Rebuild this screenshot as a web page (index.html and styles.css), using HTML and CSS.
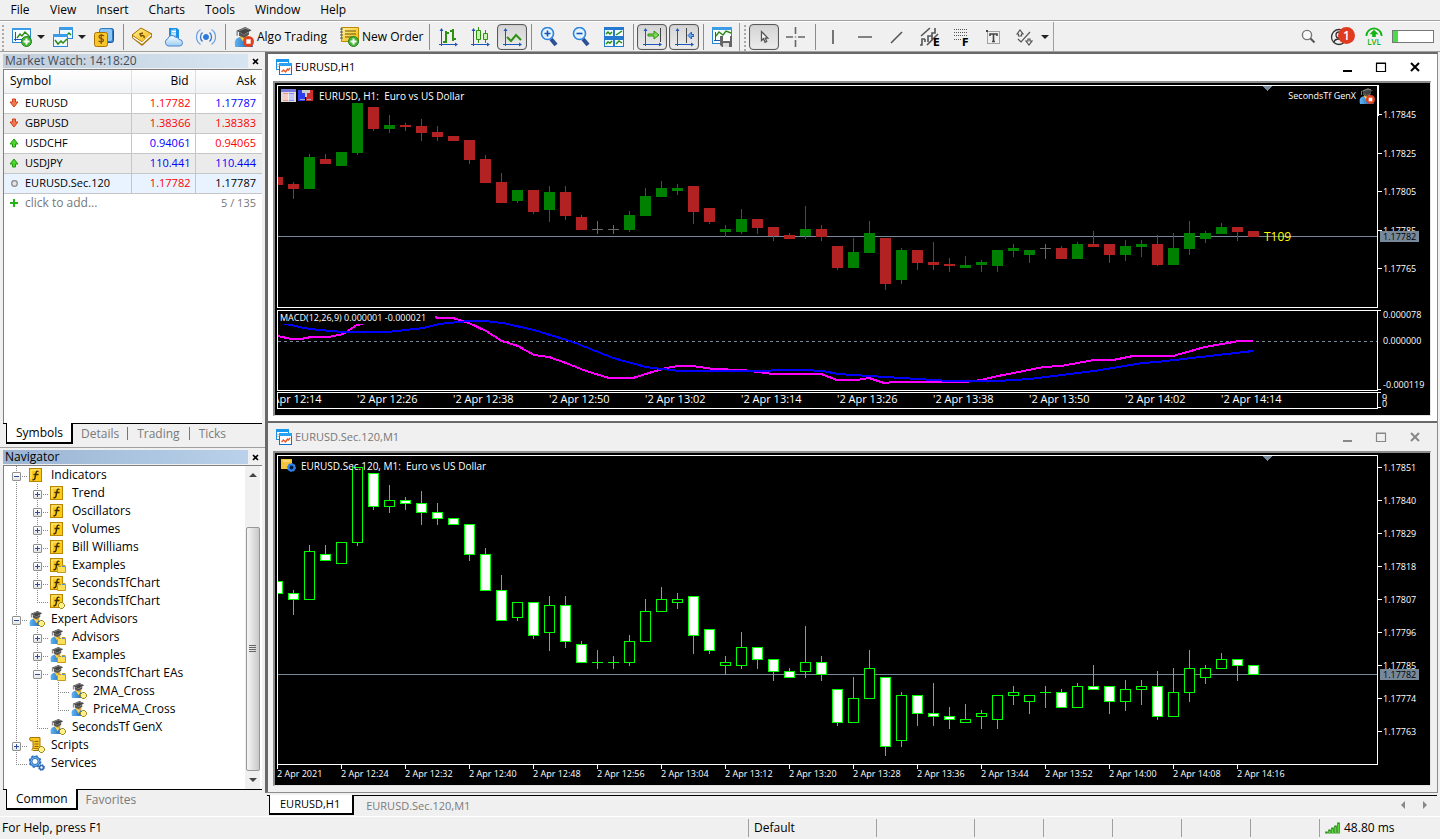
FILE: index.html
```html
<!DOCTYPE html>
<html lang="en">
<head>
<meta charset="utf-8">
<title>Trading Terminal - EURUSD,H1</title>
<link rel="stylesheet" href="styles.css">
</head>
<body>
<svg class="defs" aria-hidden="true">
  <defs>
    <linearGradient id="gold" x1="0" y1="0" x2="1" y2="1"><stop offset="0" stop-color="#fff3a0"/><stop offset="1" stop-color="#f0b400"/></linearGradient>
    <linearGradient id="sky" x1="0" y1="0" x2="0" y2="1"><stop offset="0" stop-color="#fdfeff"/><stop offset="1" stop-color="#9ccdf4"/></linearGradient>
    <linearGradient id="coat" x1="0" y1="0" x2="1" y2="0"><stop offset="0" stop-color="#5fb4f2"/><stop offset="1" stop-color="#1456a8"/></linearGradient>
    <symbol id="plus" viewBox="0 0 11 11"><circle cx="5.500" cy="5.500" r="5" fill="#45b637" stroke="#23801c"/><path d="M5.500 2.500v6M2.500 5.500h6" stroke="#fff" stroke-width="2"/></symbol>
    <symbol id="axes" viewBox="0 0 20 20"><path d="M3.500 2v17M1 17.500h17" stroke="#1d57b8" fill="none"/><path d="M1.500 4l2-3 2 3zM17 15.500l3 2-3 2z" fill="#1d57b8"/></symbol>
    <symbol id="expert" viewBox="0 0 16 16"><path d="M1 16c-1-5 0-7 4-8l3 1 3 1c3 1 4 3 4 6z" fill="url(#coat)"/><path d="M5 6h6v3l-2 2-4-2z" fill="#d9a43c"/><path d="M5 8l3 5 2-3z" fill="#f7d44c"/><path d="M2 3l7-3 5 2.500-6 3.500z" fill="#444"/><path d="M4 4v3l4 1.500 4-2.500V4l-4 2z" fill="#555"/><path d="M2.500 3v4" stroke="#777"/><path d="M4 3l5-2 3 1" stroke="#888" fill="none"/></symbol>
    <symbol id="stop" viewBox="0 0 10 10"><circle cx="5" cy="5" r="5" fill="#e0421f"/><rect x="3" y="3" width="4" height="4" fill="#fff"/></symbol>
    <symbol id="func" viewBox="0 0 16 16"><rect x=".5" y="1.500" width="12" height="13" fill="#fcc917" stroke="#b98600"/><path d="M2 3h9M2 3v9" stroke="#fff09a" fill="none"/><path d="M9.500 4.500c-1.500-1-2.200 0-2.500 1.500L6 11c-.3 1.500-1 2-2.500 1.500M4.500 7.500h5" fill="none" stroke="#3a2c00" stroke-width="1.400"/></symbol>
    <symbol id="folder" viewBox="0 0 9 8"><path d="M.5 7.500v-5l1-1H4l1-1h3l.5 1v6z" fill="#ffdf56" stroke="#c79a1e"/><path d="M5 1.500h3" stroke="#4d8fd6"/></symbol>
    <symbol id="gem" viewBox="0 0 7 7"><path d="M2.500.5h2l2 2v2l-2 2h-2l-2-2v-2z" fill="#fff08a" stroke="#958016"/></symbol>
    <symbol id="i-func" viewBox="0 0 16 16"><use href="#func" width="16" height="16"/></symbol>
    <symbol id="i-funcf" viewBox="0 0 16 16"><use href="#func" width="16" height="16"/><use href="#folder" x="7" y="8" width="9" height="8"/></symbol>
    <symbol id="i-funcg" viewBox="0 0 16 16"><use href="#func" width="16" height="16"/><use href="#gem" x="8" y="9" width="7" height="7"/></symbol>
    <symbol id="i-eaf" viewBox="0 0 16 16"><use href="#expert" width="15" height="15"/><use href="#folder" x="7" y="8" width="9" height="8"/></symbol>
    <symbol id="i-eag" viewBox="0 0 16 16"><use href="#expert" width="15" height="15"/><use href="#gem" x="9" y="9" width="7" height="7"/></symbol>
    <symbol id="i-script" viewBox="0 0 16 16"><path d="M1 .5h10v10l-1 3H4V4H1.500L.5 2z" fill="#f9c522" stroke="#a87600"/><path d="M5.500 4.500h4M5.500 7h4M5.500 9.500h4" stroke="#8b6400"/><path d="M3 13.500c0-2 1-3 2-2h6" stroke="#a87600" fill="#ffe27a"/><use href="#gem" x="9" y="9" width="7" height="7"/></symbol>
    <symbol id="i-gear" viewBox="0 0 16 16"><circle cx="6" cy="6.500" r="4" fill="none" stroke="#2d73c4" stroke-width="3"/><circle cx="6" cy="6.500" r="5.600" fill="none" stroke="#2d73c4" stroke-width="1.600" stroke-dasharray="2.200 2.200"/><circle cx="6" cy="6.500" r="4" fill="none" stroke="#7db4ea"/><circle cx="12.500" cy="12.500" r="2" fill="none" stroke="#2d6ab5" stroke-width="1.600"/><circle cx="12.500" cy="12.500" r="3" fill="none" stroke="#2d6ab5" stroke-dasharray="1.200 1.200"/></symbol>
    <symbol id="i-win" viewBox="0 0 16 16"><rect x=".5" y=".5" width="12" height="10" fill="#fff" stroke="#1c8fe3"/><path d="M0 0h13v3H0z" fill="#1898ee"/><path d="M2 5v4" stroke="#888" stroke-dasharray="1"/><rect x="3.500" y="4.500" width="12" height="11" fill="#fff" stroke="#1273cc"/><path d="M3 4h13v3H3z" fill="#28a2f2"/><path d="M5.500 13l2-2 2 2 2-3 1 1 1.500-2" stroke="#e8582a" fill="none" stroke-width="1.400"/></symbol>
  </defs>
</svg>

<div class="app">
  <nav class="menubar">
    <button>File</button><button>View</button><button>Insert</button><button>Charts</button><button>Tools</button><button>Window</button><button>Help</button>
  </nav>

  <div class="toolbar" role="toolbar">
    <span class="grip first"></span>
    <button class="tb drop" aria-label="New chart"><svg viewBox="0 0 20 20"><rect x=".5" y="1.500" width="18" height="14" fill="#f7fcff" stroke="#2a86d4"/><path d="M0 1h19v2H0z" fill="#3d9ce6"/><path d="M3.500 5v9M2 12.500h9" stroke="#1d57b8"/><path d="M5 11l3-4 2 2 3-4 3 3 2 2" fill="none" stroke="#2c8c10" stroke-width="1.400"/><use href="#plus" x="9" y="9" width="11" height="11"/></svg><i></i></button>
    <button class="tb drop" aria-label="Profiles"><svg viewBox="0 0 20 20"><rect x="6.500" y=".5" width="13" height="11" fill="#eef8ff" stroke="#2a86d4"/><path d="M6 0h14v3H6z" fill="#3d9ce6"/><path d="M14 8l2-2 2 2" fill="none" stroke="#2c8c10" stroke-width="1.500"/><rect x=".5" y="7.500" width="14" height="12" fill="#eef8ff" stroke="#2a86d4"/><path d="M0 7h15v3H0z" fill="#3d9ce6"/><path d="M2 13l3 4 3-3 2 2 4-4" fill="none" stroke="#2c8c10" stroke-width="1.500"/></svg><i></i></button>
    <button class="tb" aria-label="Market Watch"><svg viewBox="0 0 20 20"><rect x="8.500" y="1.500" width="11" height="14" rx="2" fill="#3f9be8" stroke="#17569b"/><rect x="5.500" y="1.500" width="13" height="13" rx="2" fill="#8cc6f5" stroke="#2d78bf"/><rect x=".5" y="5.500" width="13" height="14" rx="2" fill="#f8c62b" stroke="#a87400"/><path d="M10 9c-2-1.500-5-1-5 .8 0 2.400 4.500 1.200 4.500 3.400 0 1.800-3 2-5 .7M7.200 7v10" fill="none" stroke="#7d5200" stroke-width="1.200"/></svg></button>
    <span class="sep"></span>
    <button class="tb" aria-label="Book"><svg viewBox="0 0 20 20"><path d="M0 8l9-7 11 6v3l-10 9L0 11z" fill="#a97408"/><path d="M0 8l9-7 11 6-10 8z" fill="url(#gold)" stroke="#a97408"/><path d="M1 10l9 6 9-8" fill="none" stroke="#fff" stroke-width="1.400"/><path d="M11 6L8 7l1 2c2-1 4 0 3 2" fill="none" stroke="#7a5000" stroke-width="1.500"/></svg></button>
    <button class="tb" aria-label="Cloud"><svg viewBox="0 0 20 20"><path d="M5 1h8l2 2v10H5z" fill="#1a8fe6"/><path d="M7 3l5-1v8H7z" fill="#8fd0fb"/><path d="M8 4.500h4M8 7h4" stroke="#fff"/><path d="M4 19a4 4 0 010-7.500 4 4 0 017-1.500 4 4 0 014 2.500 3.300 3.300 0 011 6.500z" fill="url(#sky)" stroke="#4a86cf"/></svg></button>
    <button class="tb" aria-label="Signals"><svg viewBox="0 0 20 20" fill="none" stroke="#3577cf"><circle cx="10" cy="10" r="2.500" fill="#2a7be0"/><path d="M6.500 5.500a6 6 0 000 9M13.500 5.500a6 6 0 010 9" stroke-width="1.300"/><path d="M4.500 2.500a9 9 0 000 15M15.500 2.500a9 9 0 010 15" stroke="#6ba0e3" stroke-width="1.300"/></svg></button>
    <span class="sep"></span>
    <button class="tb text algo"><svg viewBox="0 0 20 20"><use href="#expert" width="20" height="20"/><use href="#stop" x="9" y="9" width="11" height="11"/></svg>Algo Trading</button>
    <button class="tb text order"><svg viewBox="0 0 20 20"><path d="M2.500.5h17v14h-17z" fill="url(#gold)" stroke="#c08a00"/><path d="M6 4h11M6 7h11M6 10h7" stroke="#6d5300"/><path d="M1 2h3M1 5h3M1 8h3M1 11h3" stroke="#555"/><use href="#plus" x="9" y="9" width="11" height="11"/></svg>New Order</button>
    <span class="sep"></span>
    <button class="tb" aria-label="Bar chart"><svg viewBox="0 0 20 20"><use href="#axes" width="20" height="20"/><path d="M8 4v12M5 15h3M8 6h3M15 2v12M12 4h3M15 12h3" stroke="#2f9110" stroke-width="2"/></svg></button>
    <button class="tb" aria-label="Candlesticks"><svg viewBox="0 0 20 20"><use href="#axes" width="20" height="20"/><path d="M8.500 0v16M15.500 3v13" stroke="#2f9110"/><path d="M6.500 3.500h4v9h-4zM13.500 6.500h4v6h-4z" fill="#c9f0b5" stroke="#2f9110"/></svg></button>
    <button class="tb on" aria-label="Line chart"><svg viewBox="0 0 20 20"><use href="#axes" width="20" height="20"/><path d="M5 10l4 4 5-6 5 5" stroke="#2f9110" stroke-width="2" fill="none"/></svg></button>
    <span class="sep"></span>
    <button class="tb" aria-label="Zoom in"><svg viewBox="0 0 20 20"><path d="M11 12l5 6" stroke="#2d4f96" stroke-width="4"/><circle cx="7.500" cy="6.500" r="6" fill="#e4f4ff" stroke="#2b83dc" stroke-width="1.600"/><path d="M7.500 3.500v6M4.500 6.500h6" stroke="#1452b5" stroke-width="1.600"/></svg></button>
    <button class="tb" aria-label="Zoom out"><svg viewBox="0 0 20 20"><path d="M11 12l5 6" stroke="#2d4f96" stroke-width="4"/><circle cx="7.500" cy="6.500" r="6" fill="#e4f4ff" stroke="#2b83dc" stroke-width="1.600"/><path d="M4.500 6.500h6" stroke="#1452b5" stroke-width="1.600"/></svg></button>
    <button class="tb" aria-label="Tile windows"><svg viewBox="0 0 20 20"><path d="M0 0h20v20H0z" fill="#2579d0"/><path d="M1 3h8v6H1zM11 3h8v6h-8zM1 13h8v6H1zM11 13h8v6h-8z" fill="#eefaff"/><path d="M2 7l2-2 2 2 2-2M12 8l3-2 3-2M2 17l2-2 2 1 2-2M12 17l3-3 3 2" fill="none" stroke="#2c8c10" stroke-width="1.500"/></svg></button>
    <span class="sep"></span>
    <button class="tb on" aria-label="Auto scroll"><svg viewBox="0 0 20 20"><use href="#axes" width="20" height="20"/><path d="M18.500 1v14" stroke="#444"/><path d="M6 7h6V4l5 4-5 4V9H6z" fill="#7ed957" stroke="#2f9110"/></svg></button>
    <button class="tb on" aria-label="Chart shift"><svg viewBox="0 0 20 20"><use href="#axes" width="20" height="20"/><path d="M12.500 1v15" stroke="#444"/><path d="M20 7.500h-2.500V5L14 8.500l3.500 3.500V9.500H20z" fill="#6fa8ea" stroke="#2160bd"/></svg></button>
    <span class="sep"></span>
    <button class="tb" aria-label="Templates"><svg viewBox="0 0 20 20"><rect x=".5" y=".5" width="19" height="16" fill="#f7fcff" stroke="#2a86d4"/><path d="M0 0h20v3H0z" fill="#3d9ce6"/><path d="M3.500 5v9M2 13.500h6" stroke="#1d57b8"/><path d="M4 9l3-4 4 3 3-4 5 2" fill="none" stroke="#2c8c10" stroke-width="1.400"/><path d="M8 9h12v11H10l-2-2z" fill="#666"/><path d="M11 9h7v5h-7z" fill="#fff"/><path d="M11 16h6v4h-6z" fill="#ddd"/></svg></button>
    <span class="grip"></span>
    <button class="tb on" aria-label="Cursor"><svg viewBox="0 0 20 20"><path d="M7.500 4.500v9l2-1.800 1.600 3.600 1.600-.8-1.500-3.400h2.600z" fill="#fff" stroke="#555" stroke-width="1.300"/></svg></button>
    <button class="tb" aria-label="Crosshair"><svg viewBox="0 0 20 20"><path d="M9.500 0v7M9.500 13v7M0 10h7M12 10h7M9.500 9.500v1" stroke="#666" stroke-width="1.600"/></svg></button>
    <span class="sep"></span>
    <button class="tb" aria-label="Vertical line"><svg viewBox="0 0 20 20"><path d="M9 3v14" stroke="#555" stroke-width="1.600"/></svg></button>
    <button class="tb" aria-label="Horizontal line"><svg viewBox="0 0 20 20"><path d="M2 10h14" stroke="#666" stroke-width="1.600"/></svg></button>
    <button class="tb" aria-label="Trend line"><svg viewBox="0 0 20 20"><path d="M3 16L14 5" stroke="#555" stroke-width="1.600"/></svg></button>
    <button class="tb" aria-label="Equidistant channel"><svg viewBox="0 0 20 20"><path d="M1 9L10 1M7 18L18 7M-1 18h3v-6h3M8 15V9h4V6h3V1M12 14V8M5 12v3" fill="none" stroke="#555" stroke-width="1.600"/><text x="13" y="19" class="glyph">E</text></svg></button>
    <button class="tb" aria-label="Fibonacci"><svg viewBox="0 0 20 20"><path d="M2 2.500h14M2 5.500h14M2 8.500h14M2 12.500h8" stroke="#555" stroke-dasharray="1 1"/><text x="10" y="19" class="glyph">F</text></svg></button>
    <button class="tb" aria-label="Text"><svg viewBox="0 0 20 20"><rect x="3.500" y="4.500" width="12" height="12" fill="none" stroke="#555" stroke-dasharray="1 1"/><path d="M2 3h2v2H2z" fill="#444"/><path d="M6 9V7h7v2M9.500 7v7M8 14.500h3" stroke="#444" fill="none" stroke-width="1.600"/></svg></button>
    <button class="tb drop" aria-label="Objects"><svg viewBox="0 0 20 20"><path d="M1 7l3-4 3 4H5.500v2h-3V7zM10 14h2v-2h2v2h2l-3 4zM2 12l3 3 9-10" fill="none" stroke="#555" stroke-width="1.200"/></svg><i></i></button>
    <span class="endline"></span>
    <span class="spacer"></span>
    <button class="tb" aria-label="Search"><svg viewBox="0 0 20 20"><circle cx="9" cy="8" r="4.600" fill="#fafafa" stroke="#777" stroke-width="1.400"/><path d="M12.500 11.500l4 4" stroke="#555" stroke-width="2"/></svg></button>
    <button class="tb account" aria-label="Account"><svg viewBox="0 0 20 20"><circle cx="9" cy="10" r="7.500" fill="none" stroke="#333" stroke-width="1.300"/><circle cx="9" cy="8" r="3" fill="none" stroke="#333" stroke-width="1.300"/><path d="M4 15c1-4 9-4 10 0" fill="none" stroke="#333" stroke-width="1.300"/></svg><b>1</b></button>
    <button class="tb level" aria-label="Level"><svg viewBox="0 0 20 12"><path d="M1.500 10a8.500 8.500 0 0117 0" fill="none" stroke="#12b312" stroke-width="2"/><path d="M10 3l5 5h-3v3H8V8H5z" fill="#12b312"/></svg><em>LVL</em></button>
    <span class="meter"><span></span></span>
  </div>

  <div class="work">
    <aside class="side">
      <section class="panel watch">
        <header class="ptitle dim"><h2>Market Watch: 14:18:20</h2><button aria-label="Close"><svg viewBox="0 0 7 7"><path d="M1 1l5 5M6 1L1 6" stroke="#000" stroke-width="1.600"/></svg></button></header>
        <div class="box">
          <table>
            <thead><tr><th>Symbol</th><th>Bid</th><th>Ask</th></tr></thead>
            <tbody>
              <tr><td><svg class="ar" viewBox="0 0 10 10"><path d="M3.500 1h3v3H9L5 9 1 4h2.500z" fill="#ee7a55" stroke="#cf3f14"/></svg>EURUSD</td><td class="r">1.17782</td><td class="b">1.17787</td></tr>
              <tr><td><svg class="ar" viewBox="0 0 10 10"><path d="M3.500 1h3v3H9L5 9 1 4h2.500z" fill="#ee7a55" stroke="#cf3f14"/></svg>GBPUSD</td><td class="r">1.38366</td><td class="r">1.38383</td></tr>
              <tr><td><svg class="ar" viewBox="0 0 10 10"><path d="M3.500 9h3V6H9L5 1 1 6h2.500z" fill="#4fd62c" stroke="#1f9a0c"/></svg>USDCHF</td><td class="b">0.94061</td><td class="r">0.94065</td></tr>
              <tr><td><svg class="ar" viewBox="0 0 10 10"><path d="M3.500 9h3V6H9L5 1 1 6h2.500z" fill="#4fd62c" stroke="#1f9a0c"/></svg>USDJPY</td><td class="b">110.441</td><td class="b">110.444</td></tr>
              <tr class="sel"><td><svg class="ar" viewBox="0 0 10 10"><circle cx="5.500" cy="5.500" r="2.800" fill="#e4e4e4" stroke="#8c8c8c" stroke-width="1.300"/></svg>EURUSD.Sec.120</td><td class="r">1.17782</td><td>1.17787</td></tr>
              <tr class="add"><td><svg class="ar" viewBox="0 0 10 10"><path d="M5 1v8M1 5h8" stroke="#22b414" stroke-width="2"/></svg>click to add...</td><td></td><td>5 / 135</td></tr>
            </tbody>
          </table>
        </div>
        <div class="tabs"><button class="cur">Symbols</button><button>Details</button><button>Trading</button><button>Ticks</button></div>
      </section>

      <section class="panel navi">
        <header class="ptitle"><h2>Navigator</h2><button aria-label="Close"><svg viewBox="0 0 7 7"><path d="M1 1l5 5M6 1L1 6" stroke="#000" stroke-width="1.600"/></svg></button></header>
        <div class="box split">
          <ul class="tree">
            <li><span class="g t"><button class="ex minus" aria-label="Collapse"></button></span><svg><use href="#i-func"/></svg>Indicators</li>
            <li><span class="g v"></span><span class="g t"><button class="ex" aria-label="Expand"></button></span><svg><use href="#i-func"/></svg>Trend</li>
            <li><span class="g v"></span><span class="g t"><button class="ex" aria-label="Expand"></button></span><svg><use href="#i-func"/></svg>Oscillators</li>
            <li><span class="g v"></span><span class="g t"><button class="ex" aria-label="Expand"></button></span><svg><use href="#i-func"/></svg>Volumes</li>
            <li><span class="g v"></span><span class="g t"><button class="ex" aria-label="Expand"></button></span><svg><use href="#i-func"/></svg>Bill Williams</li>
            <li><span class="g v"></span><span class="g t"><button class="ex" aria-label="Expand"></button></span><svg><use href="#i-funcf"/></svg>Examples</li>
            <li><span class="g v"></span><span class="g t"><button class="ex" aria-label="Expand"></button></span><svg><use href="#i-funcf"/></svg>SecondsTfChart</li>
            <li><span class="g v"></span><span class="g l"></span><svg><use href="#i-funcg"/></svg>SecondsTfChart</li>
            <li><span class="g t"><button class="ex minus" aria-label="Collapse"></button></span><svg><use href="#i-eag"/></svg>Expert Advisors</li>
            <li><span class="g v"></span><span class="g t"><button class="ex" aria-label="Expand"></button></span><svg><use href="#i-eaf"/></svg>Advisors</li>
            <li><span class="g v"></span><span class="g t"><button class="ex" aria-label="Expand"></button></span><svg><use href="#i-eaf"/></svg>Examples</li>
            <li><span class="g v"></span><span class="g t"><button class="ex minus" aria-label="Collapse"></button></span><svg><use href="#i-eaf"/></svg>SecondsTfChart EAs</li>
            <li><span class="g v"></span><span class="g v"></span><span class="g t"></span><svg><use href="#i-eag"/></svg>2MA_Cross</li>
            <li><span class="g v"></span><span class="g v"></span><span class="g l"></span><svg><use href="#i-eag"/></svg>PriceMA_Cross</li>
            <li><span class="g v"></span><span class="g l"></span><svg><use href="#i-eag"/></svg>SecondsTf GenX</li>
            <li><span class="g t"><button class="ex" aria-label="Expand"></button></span><svg><use href="#i-script"/></svg>Scripts</li>
            <li><span class="g l"></span><svg><use href="#i-gear"/></svg>Services</li>
          </ul>
          <div class="scroll"><span class="arrow up"></span><span class="thumb"><i></i></span><span class="arrow down"></span></div>
        </div>
        <div class="tabs"><button class="cur">Common</button><button>Favorites</button></div>
      </section>
    </aside>

    <main class="mdi">
      <div class="windows">
        <section class="win active">
          <header><svg class="wico"><use href="#i-win"/></svg><h1>EURUSD,H1</h1>
            <div class="ctl"><button aria-label="Minimize"><svg viewBox="0 0 12 12"><path d="M2 10h9" stroke-width="2"/></svg></button><button aria-label="Maximize"><svg viewBox="0 0 12 12"><path d="M1.500 2.500h9v8h-9zM1 2h10" stroke-width="1.200"/></svg></button><button aria-label="Close"><svg viewBox="0 0 12 12"><path d="M2 2l8 8M10 2l-8 8" stroke-width="2"/></svg></button></div>
          </header>
          <div class="chart">
            <div class="plot p-main"><svg id="h1"></svg>
              <p class="legend"><svg viewBox="0 0 15 13"><path d="M0 0h15v13H0z" fill="#ddd"/><path d="M0 0h15v3H0z" fill="#7777dd"/><path d="M2 4h5v8H2z" fill="#ee9a88"/><path d="M8 4h5v8H8z" fill="#8c8cf0"/><path d="M2 6h11M2 8h11M2 10h11" stroke="#fff"/></svg><svg viewBox="0 0 15 13"><path d="M0 1h7v11H0z" fill="#2c3cf0"/><path d="M8 1h7v11H8z" fill="#d02c2c"/><path d="M4 1h8v3H9v4H7V4H4z" fill="#ccc"/><path d="M2 10.500h5M9 10.500h4" stroke="#aab"/></svg>EURUSD, H1:&nbsp; Euro vs US Dollar</p>
              <p class="expert">SecondsTf GenX<svg viewBox="0 0 16 16"><use href="#expert" width="16" height="16"/><use href="#stop" x="7" y="7" width="9" height="9"/></svg></p>
            </div><div class="axis"><svg id="h1-axis"></svg></div>
            <div class="plot p-macd"><svg>
              <path class="zero" d="M0 30.500h3000"/>
              <path class="main" d="M0 25L13 28 23 28 33 26 51 26 65 23 79 14 85 13M157 6L160 7 175 7 191 12 208 20 224 30 240 35 256 44 271 46 288 52 308 60 331 67 355 67 371 62 388 57 400 55 415 55 435 58 465 59 480 61 495 63 543 63 559 69 579 69 591 67 606 72 616 71 687 71 703 69 720 65 766 56 783 55 816 49 835 49 855 45 895 45 927 36 961 30 975 30"/>
              <path class="signal" d="M0 11L8 13 31 18 65 21 110 21 145 17 161 13 191 10 206 10 225 12 256 19 295 31 335 47 368 56 401 60 462 60 525 59 545 60 560 63 608 66 672 70 719 70 752 68 816 60 864 52 879 51 931 45 975 40"/>
            </svg><p class="legend">MACD(12,26,9) 0.000001 -0.000021</p></div>
            <div class="axis"><svg><path d="M0 .5h3M0 79.500h3" stroke="#fff"/><text x="5" y="8">0.000078</text><text x="5" y="34">0.000000</text><text x="5" y="78">-0.000119</text></svg></div>
            <div class="plot p-time"><svg id="h1-time"></svg></div>
            <div class="axis over"><svg><path d="M0 .5h3M0 15.500h3" stroke="#fff"/><text x="4" y="9">9</text><text x="4" y="15">0</text></svg></div>
          </div>
        </section>
        <section class="win">
          <header><svg class="wico"><use href="#i-win"/></svg><h1>EURUSD.Sec.120,M1</h1>
            <div class="ctl"><button aria-label="Minimize"><svg viewBox="0 0 12 12"><path d="M2 10h9" stroke-width="2"/></svg></button><button aria-label="Maximize"><svg viewBox="0 0 12 12"><path d="M1.500 2.500h9v8h-9zM1 2h10" stroke-width="1.200"/></svg></button><button aria-label="Close"><svg viewBox="0 0 12 12"><path d="M2 2l8 8M10 2l-8 8" stroke-width="2"/></svg></button></div>
          </header>
          <div class="chart">
            <div class="plot p-sec"><svg id="m1"></svg>
              <p class="legend"><svg viewBox="0 0 15 13"><path d="M0 0h11v10H0z" fill="#f3c33b"/><path d="M2 2h7" stroke="#fff3b0"/><circle cx="10.500" cy="8.500" r="3" fill="#001a40" stroke="#2f80ea" stroke-width="2"/><circle cx="10.500" cy="8.500" r="4" fill="none" stroke="#2f80ea" stroke-dasharray="1.500 1.500"/></svg>EURUSD.Sec.120, M1:&nbsp; Euro vs US Dollar</p>
            </div><div class="axis"><svg id="m1-axis"></svg></div>
            <div class="dates"><svg id="m1-time"></svg></div>
          </div>
        </section>
      </div>
      <div class="doctabs"><button class="cur">EURUSD,H1</button><button>EURUSD.Sec.120,M1</button><span class="pager"><i class="lt"></i><i class="gt"></i></span></div>
    </main>
  </div>

  <footer class="status">
    <span class="help">For Help, press F1</span><span class="c1">Default</span><span class="c2"></span><span class="c3"></span><span class="c3"></span><span class="c3"></span><span class="c3"></span><span class="c3"></span><span class="c4"><svg viewBox="0 0 15 12"><path d="M1.500 9.500v2M4.500 7.500v4M7.500 5.500v6M10.500 3.500v8M13.500.5v11" stroke="#1f8f0c" stroke-width="2.600"/><path d="M4.500 9v2M7.500 7v4M10.500 5v6M13.500 2v9" stroke="#58d63a"/></svg>48.80 ms</span>
  </footer>
</div>
<script src="chart.js"></script>
</body>
</html>
```

FILE: styles.css
```css
* { box-sizing: border-box; }
body { margin: 0; background: #f0f0f0; color: #000; font: 12px/16px "Open Sans", "Noto Sans", sans-serif; }
button { font: inherit; color: inherit; background: none; border: 0; padding: 0; margin: 0; }
h1, h2, p, ul { margin: 0; padding: 0; font: inherit; }
svg { display: block; flex: none; }
.defs { position: absolute; width: 0; height: 0; }
.app { display: flex; flex-direction: column; min-height: 100vh; border-bottom: 1px solid #2b3a52; }

.menubar { display: flex; height: 21px; border-bottom: 1px solid #a0a0a0; }
.menubar button { padding: 0 10px 1px; min-width: 40px; }
.menubar button:nth-child(3), .menubar button:nth-child(4) { min-width: 52px; }

.toolbar { display: flex; align-items: center; gap: 2px; height: 31px; border-top: 1px solid #fff; border-bottom: 1px solid #a0a0a0; }
.grip { width: 8px; height: 28px; border-left: 1px solid #a0a0a0; background: radial-gradient(circle, #aaa 1px, transparent 1px) 3px 1px / 4px 4px repeat-y; }
.grip.first { width: 5px; border: 0; background-position: 1px 1px; }
.tb { display: flex; align-items: center; justify-content: center; width: 30px; height: 26px; white-space: nowrap; flex: none; }
.tb > svg { width: 20px; height: 20px; }
.tb.drop { width: 39px; padding-left: 5px; justify-content: flex-start; gap: 5px; }
.tb.drop i { width: 0; height: 0; border: 4px solid transparent; border-top-color: #222; border-bottom: 0; flex: none; }
.tb.text { justify-content: flex-start; gap: 3px; padding-left: 5px; }
.tb.algo { width: 103px; }
.tb.order { width: 91px; }
.tb.on { border: 1px solid #5a5a5a; border-radius: 4px; background: linear-gradient(#d4d4d4, #ececec); box-shadow: inset 0 0 1px #888; }
.sep { width: 4px; height: 26px; background: linear-gradient(#8c8c8c, #8c8c8c) 2px 0 / 1px 100% no-repeat; flex: none; }
.endline { width: 2px; height: 29px; border-right: 1px solid #a0a0a0; }
.spacer { flex: 1; }
.glyph { font: bold 10px "DejaVu Sans", sans-serif; }
.account { position: relative; }
.account b { position: absolute; left: 13px; top: 3px; width: 17px; height: 17px; border-radius: 50%; background: #e03a20; color: #fff; font-weight: 600; line-height: 17px; text-align: center; }
.level { flex-direction: column; margin-left: 2px; }
.level > svg { width: 18px; height: 11px; }
.level em { font: normal 600 8px/8px "Open Sans", sans-serif; color: #12b312; }
.meter { width: 42px; height: 13px; margin: 0 6px 0 1px; border: 1px solid #777; background: #fff; display: flex; }
.meter span { width: 5px; background: #4bdc4b; }

.work { display: grid; grid-template-columns: 265px minmax(0, 1fr); flex: 1; }
.side { display: flex; flex-direction: column; }
.panel { display: flex; flex-direction: column; padding: 2px 3px 0; }
.watch { flex: 1; }
.navi { border-top: 1px solid #a0a0a0; padding: 2px 3px 4px; }
.ptitle { display: flex; justify-content: space-between; height: 14px; margin-bottom: 1px; line-height: 13px; }
.ptitle h2 { flex: 1; padding-left: 2px; background: linear-gradient(90deg, #9ab4d2, #b9d1ea); }
.ptitle.dim h2 { color: #444c58; background: linear-gradient(90deg, #bfcddb, #d7e4f2); }
.ptitle button { width: 14px; display: flex; justify-content: center; align-items: center; }
.ptitle button svg { width: 7px; height: 7px; }
.box { flex: 1; border: solid #808080; border-width: 1px 0 0 1px; background: #fff; }
.watch table { width: 100%; border-collapse: collapse; table-layout: fixed; }
.watch th { height: 23px; padding: 0 6px 0; font-weight: normal; text-align: right; background: linear-gradient(#fff, #f1f2f4); border-right: 1px solid #dedfe1; border-bottom: 1px solid #d5d5d5; }
.watch th:first-child { width: 127px; text-align: left; padding-left: 6px; }
.watch th:nth-child(2) { width: 64px; }
.watch tbody { font-size: 11px; }
.watch td { height: 20px; padding: 0 4px 0 3px; text-align: right; border-right: 1px solid #c6c6c6; border-bottom: 1px solid #c6c6c6; white-space: nowrap; line-height: 18px; }
.watch td:first-child { text-align: left; padding-left: 5px; }
.watch td:last-child, .watch th:last-child { border-right: 0; padding-right: 6px; }
.watch tbody tr:nth-child(even) { background: #ebebeb; }
.watch tbody tr.sel { background: #e8f3ff; }
.watch tbody tr.add { background: #fff; color: #777; }
.watch .add td { border: 0; font-size: 12px; }
.watch .add td:last-child { font-size: 11px; }
.ar { display: inline-block; width: 10px; height: 10px; margin-right: 6px; vertical-align: -1px; }
.r { color: #f00; }
.b { color: #00f; }
.tabs { display: flex; height: 23px; border-top: 1px solid #000; padding-left: 3px; color: #7a7a7a; }
.watch .tabs { height: 24px; }
.tabs button { height: 19px; padding: 0 8px 0 11px; }
.tabs button + button + button { border-left: 1px solid #777; height: 13px; margin-top: 3px; line-height: 11px; padding: 0 9px; }
.tabs .cur { height: 21px; margin-top: -1px; padding: 0 8px 0 9px; background: #fff; color: #000; border: solid #000; border-width: 0 2px 2px 1px; }
.tabs .cur + button { padding-left: 8px; }

.split { display: flex; padding-left: 2px; }
.tree { flex: 1; list-style: none; padding-bottom: 16px; min-height: 323px; }
.tree li { display: flex; align-items: center; height: 18px; white-space: nowrap; }
.tree li > svg { width: 16px; height: 16px; margin: 0 6px 0 2px; }
.g { display: flex; align-items: center; justify-content: center; width: 21px; height: 18px; padding-top: 2px; flex: none; }
.v { background: repeating-linear-gradient(#888 0 1px, #fff 1px 2px) 10px 0 / 1px 18px no-repeat; }
.t { background: repeating-linear-gradient(#888 0 1px, #fff 1px 2px) 10px 0 / 1px 18px no-repeat, repeating-linear-gradient(90deg, #888 0 1px, #fff 1px 2px) 10px 10px / 11px 1px no-repeat; }
.l { background: repeating-linear-gradient(#888 0 1px, #fff 1px 2px) 10px 0 / 1px 10px no-repeat, repeating-linear-gradient(90deg, #888 0 1px, #fff 1px 2px) 10px 10px / 11px 1px no-repeat; }
.ex { width: 9px; height: 9px; border: 1px solid #919191; border-radius: 1px; background: linear-gradient(#2b4ea0, #2b4ea0) 1px 3px / 5px 1px no-repeat, linear-gradient(#2b4ea0, #2b4ea0) 3px 1px / 1px 5px no-repeat, linear-gradient(#fff, #e4e4e4); }
.ex.minus { background: linear-gradient(#2b4ea0, #2b4ea0) 1px 3px / 5px 1px no-repeat, linear-gradient(#fff, #e4e4e4); }
.scroll { width: 15px; margin-right: 2px; background: #f0f0f0; display: flex; flex-direction: column; align-items: center; }
.arrow { height: 18px; display: flex; align-items: center; }
.arrow::before { content: ""; border: 4px solid transparent; }
.up::before { border-bottom-color: #444; border-top: 0; }
.down::before { border-top-color: #444; border-bottom: 0; }
.thumb { width: 14px; flex: 1; margin-top: 43px; border: 1px solid #979797; border-radius: 2px; background: linear-gradient(90deg, #f5f5f5, #e0e0e0 50%, #c8c8ca); display: flex; align-items: center; justify-content: center; }
.thumb i { width: 7px; height: 8px; background: repeating-linear-gradient(#666 0 1px, transparent 1px 2px); }

.mdi { display: flex; flex-direction: column; min-width: 0; }
.windows { border-left: 3px solid #696969; border-top: 2px solid #696969; border-right: 1px solid #8c8c8c; border-bottom: 1px solid #8c8c8c; margin-right: 2px; flex: 1; }
.win { padding: 0 6px 5px 5px; }
.win.active { background: #fff; }
.win + .win { border-top: 2px solid #696969; padding-bottom: 6px; }
.win header { display: flex; align-items: center; height: 27px; padding: 0 0 1px 3px; color: #777; font-size: 11px; }
.win + .win header { height: 28px; }
.win.active header { color: #000; }
.wico { width: 16px; height: 16px; margin-right: 3px; }
.ctl { display: flex; gap: 22px; margin-left: auto; padding-right: 10px; }
.ctl svg { width: 12px; height: 12px; fill: none; stroke: #888; }
.active .ctl svg { stroke: #000; }
.chart { display: grid; grid-template-columns: minmax(0, 1fr) 52px; padding: 2px 0 0 2px; background: #000; color: #fff; border: solid #a0a0a0; border-width: 2px 1px 1px 2px; border-color: #8c8c8c #e3e3e3 #e3e3e3 #8c8c8c; font: 10px/12px "Open Sans", sans-serif; }
.active .chart { padding-bottom: 6px; }
.chart text { fill: #fff; font: 9px "Open Sans", sans-serif; }
.plot { position: relative; border: 1px solid #fff; overflow: hidden; }
.plot > svg, .axis > svg, .dates > svg { width: 100%; height: 100%; shape-rendering: crispEdges; }
.axis { overflow: hidden; }
.p-main, .p-main + .axis { height: 223px; margin-bottom: 2px; }
.p-macd, .p-macd + .axis { height: 81px; margin-bottom: 1px; }
.p-time, .p-time + .axis { height: 17px; }
.p-time { overflow-x: clip; overflow-y: visible; }
.p-time > svg, .over, .over > svg { overflow: visible; }
.p-sec, .p-sec + .axis { height: 310px; }
.dates { height: 20px; grid-column: 1 / 3; }
.legend { position: absolute; left: 3px; top: 3px; display: flex; gap: 2px; align-items: center; }
.legend svg { width: 15px; height: 13px; }
.legend svg + svg { margin-right: 4px; }
.p-sec .legend svg { margin-right: 3px; }
.p-macd .legend { left: 0; top: 1px; padding: 0 2px; background: #000; font-size: 9px; }
.expert { position: absolute; right: 2px; top: 2px; display: flex; align-items: center; gap: 3px; font-size: 9px; }
.expert svg { width: 16px; height: 16px; }
.chart .time { font-size: 11px; }
.chart .mark { font-size: 12px; fill: #ff0; }
.chart .tag { fill: #000; }
.zero { stroke: #778899; stroke-dasharray: 3 3; fill: none; }
.main, .signal { fill: none; stroke-width: 2; stroke: #f0f; }
.signal { stroke: #00f; }

.doctabs { display: flex; height: 20px; margin: 2px 3px 1px 2px; border-top: 1px solid #000; color: #7a7a7a; align-items: flex-start; font-size: 11px; }
.doctabs button { padding: 1px 12px 0; height: 18px; }
.doctabs .cur { margin: -1px 0 0 2px; padding: 0 12px 0 10px; height: 20px; background: #fff; color: #000; border: solid #000; border-width: 0 2px 2px 1px; }
.pager { display: flex; gap: 18px; margin: 5px 10px 0 auto; }
.pager i { border: 4px solid transparent; width: 0; height: 0; }
.pager .lt { border-right-color: #888; border-left: 0; }
.pager .gt { border-left-color: #888; border-right: 0; }

.status { display: flex; height: 24px; padding: 2px 0 3px; border-top: 1px solid #fff; line-height: 20px; }
.status span { border-left: 1px solid #a0a0a0; padding-left: 5px; display: flex; align-items: center; gap: 4px; }
.status .help { flex: 1; border: 0; padding-left: 2px; }
.c1 { width: 128px; }
.c2 { width: 98px; }
.c3 { width: 69px; }
.c4 { width: 121px; }
.c4 svg { width: 15px; height: 12px; }
```

FILE: chart.js
```js
// open, close, high, low in points above 1.17000
const bars = [
  [813,809,813,809],[809,807,810,802],[807,823,825,807],[822,820,825,820],[819,826,826,819],[826,851,851,825],
  [849,838,849,837],[838,840,845,836],[840,839,841,837],[839,836,843,832],[836,834,839,832],[834,832,834,832],
  [832,822,832,820],[822,810,824,810],[810,800,815,800],[801,806,806,800],[806,795,806,794],[796,805,808,790],
  [805,793,808,791],[792,786,793,786],[786,786,790,784],[786,786,788,784],[786,793,795,785],[793,803,807,793],
  [803,807,811,803],[806,807,809,804],[808,795,808,789],[797,790,797,789],[785,786,788,782],[785,791,796,784],
  [791,787,791,784],[787,783,787,780],[783,781,784,781],[783,786,798,781],[786,782,788,780],[777,766,777,765],
  [766,774,781,766],[774,784,790,774],[781,758,781,755],[760,775,776,758],[775,769,775,765],[769,768,779,765],
  [768,767,771,764],[766,767,772,766],[768,769,770,764],[767,775,775,764],[775,776,778,772],[773,775,775,769],
  [776,776,778,771],[776,771,777,771],[771,778,779,771],[778,777,785,777],[778,773,778,769],[773,777,780,770],
  [777,778,780,772],[778,768,783,767],[768,776,784,768],[776,784,790,773],[781,784,785,779],[784,787,789,784],
  [787,785,787,780],[785,782,785,782]
];
const last = 782;
const NS = "http://www.w3.org/2000/svg";

function add(svg, tag, attrs, text) {
  const el = document.createElementNS(NS, tag);
  for (const k in attrs) el.setAttribute(k, attrs[k]);
  if (text) el.textContent = text;
  svg.appendChild(el);
}
const byId = id => document.getElementById(id);

function candles(svg, y, outlined) {
  add(svg, "rect", { x: 0, y: y(last), width: "100%", height: 1, fill: "#778899" });
  bars.forEach(([open, close, high, low], i) => {
    const x = 16 * i - 1, top = y(Math.max(open, close)), bottom = y(Math.min(open, close));
    const doji = open === close;
    const line = outlined ? "#00ff00" : doji ? "#696969" : close > open ? "#008000" : "#b22222";
    add(svg, "rect", { x, y: y(high), width: 1, height: y(low) - y(high) + 1, fill: line });
    add(svg, "rect", { x: x - 5, y: top, width: 11, height: bottom - top + 1, fill: line });
    if (outlined && !doji)
      add(svg, "rect", { x: x - 4, y: top + 1, width: 9, height: bottom - top - 1, fill: close > open ? "#000" : "#fff" });
  });
}

function prices(svg, y, list) {
  list.forEach(p => {
    add(svg, "rect", { x: 0, y: y(p) + 1, width: 4, height: 1, fill: "#fff" });
    add(svg, "text", { x: 5, y: y(p) + 5 }, "1.17" + p);
  });
  add(svg, "rect", { x: 2, y: y(last) - 4, width: 39, height: 11, fill: "#778899" });
  add(svg, "text", { x: 5, y: y(last) + 5, class: "tag" }, "1.17" + last);
}

const yH1 = p => 150 - Math.floor((p - last) * 1.93);
const yM1 = p => 218 - (p - last) * 3;

candles(byId("h1"), yH1, false);
add(byId("h1"), "text", { x: 986, y: 155, class: "mark" }, "T109");
add(byId("h1"), "path", { d: "M984 0h10l-5 5z", fill: "#778899" });
prices(byId("h1-axis"), p => yH1(p) - (p === last ? 0 : 1), [845, 825, 805, 785, 765]);
add(byId("h1-axis"), "rect", { x: 0, y: 0, width: 1, height: 31, fill: "#fff" });

["12:14","12:26","12:38","12:50","13:02","13:14","13:26","13:38","13:50","14:02","14:14"].forEach((t, i) =>
  add(byId("h1-time"), "text", { x: 96 * i - 17, y: 10, class: "time" }, "'2 Apr " + t));

candles(byId("m1"), yM1, true);
add(byId("m1"), "path", { d: "M984 0h10l-5 5z", fill: "#778899" });
prices(byId("m1-axis"), yM1, [851, 840, 829, 818, 807, 796, 785, 774, 763]);

["2021","12:24","12:32","12:40","12:48","12:56","13:04","13:12","13:20","13:28","13:36","13:44","13:52","14:00","14:08","14:16"].forEach((t, i) => {
  add(byId("m1-time"), "rect", { x: 64 * i, y: 0, width: 1, height: 4, fill: "#fff" });
  add(byId("m1-time"), "text", { x: 64 * i, y: 12 }, "2 Apr " + t);
});
```
